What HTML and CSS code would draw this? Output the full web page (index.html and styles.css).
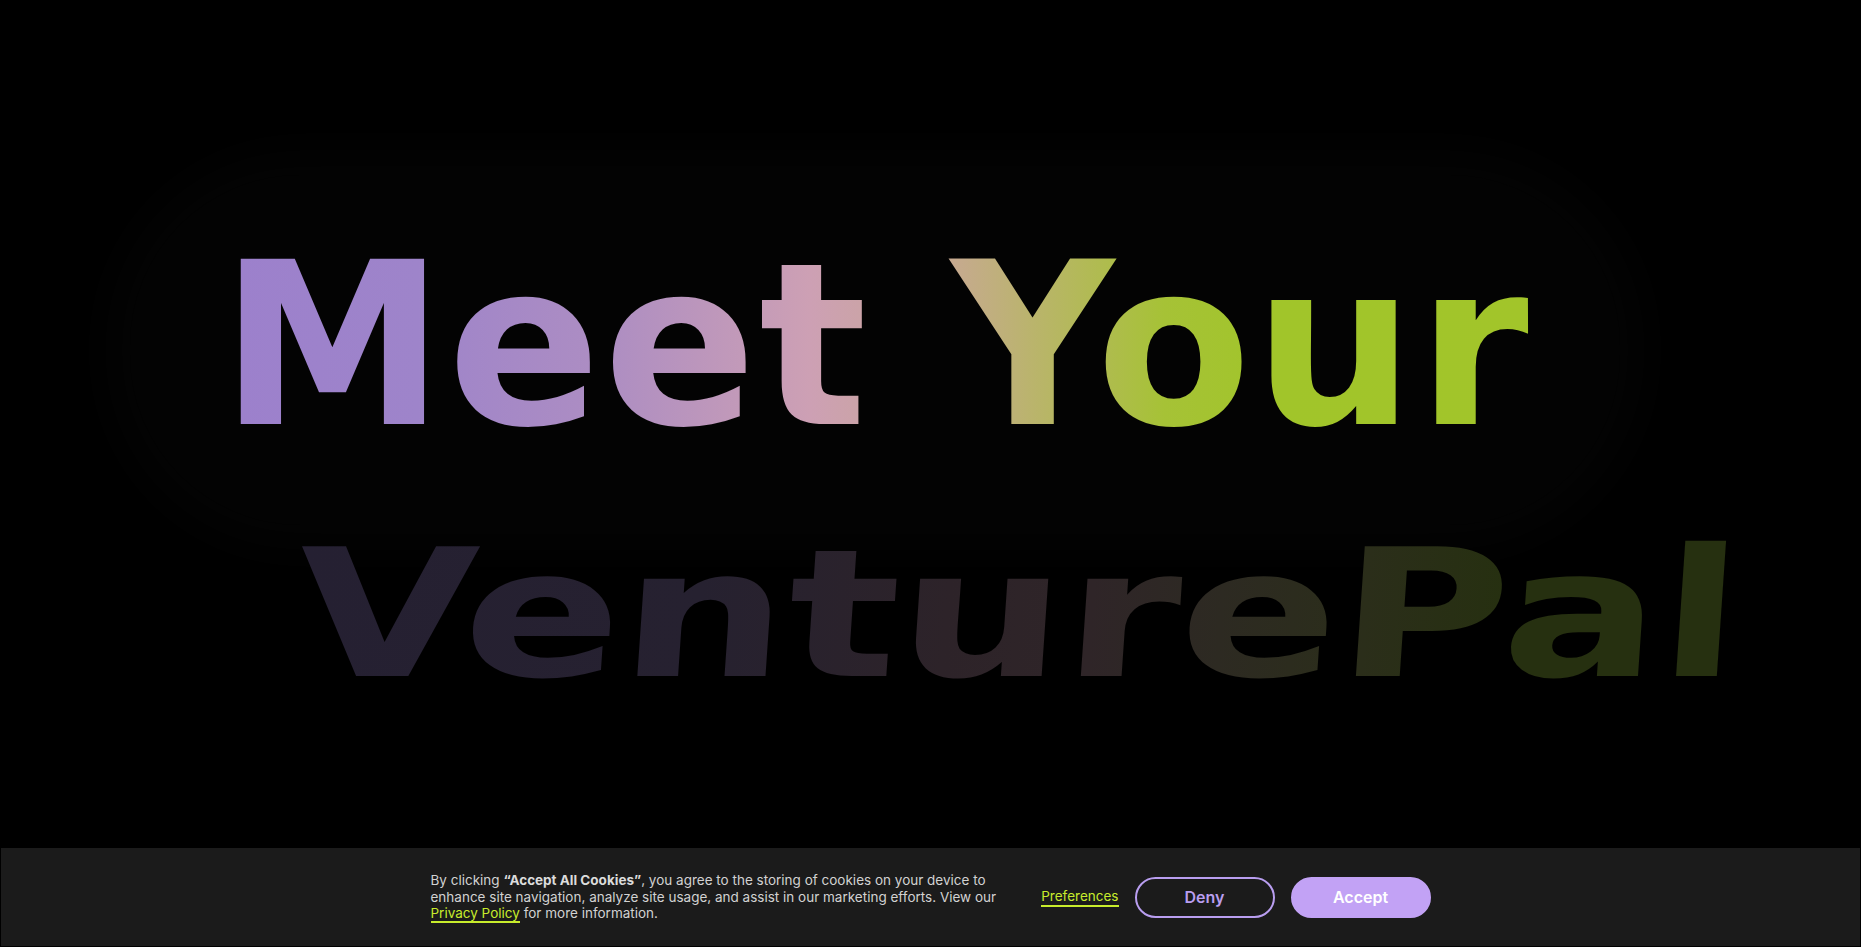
FILE: index.html
```html
<!DOCTYPE html>
<html lang="en">
<head>
<meta charset="utf-8">
<title>Meet Your VenturePal</title>
<link rel="stylesheet" href="styles.css">
</head>
<body>
<main class="hero">
  <div class="halo"></div>
  <h1 class="headline">
    <span class="line line-top">Meet Your</span>
    <span class="line line-bottom">VenturePal</span>
  </h1>
</main>
<div class="cookie-banner">
  <div class="cookie-inner">
    <p class="cookie-text">By clicking <strong>“Accept All Cookies”</strong>, you agree to the storing of cookies on your device to enhance site navigation, analyze site usage, and assist in our marketing efforts. View our <a class="policy-link" href="#">Privacy Policy</a> for more information.</p>
    <div class="cookie-actions">
      <a class="pref-link" href="#">Preferences</a>
      <button class="btn btn-deny" type="button">Deny</button>
      <button class="btn btn-accept" type="button">Accept</button>
    </div>
  </div>
</div>
</body>
</html>
```
FILE: styles.css
```css
html, body {
  margin: 0;
  padding: 0;
  background: #000;
  height: 947px;
  overflow: hidden;
}

.hero {
  position: relative;
  height: 947px;
  box-sizing: border-box;
  padding-top: 233px;
}

.halo {
  position: absolute;
  left: 130px;
  top: 175px;
  width: 1490px;
  height: 350px;
  border-radius: 170px;
  background: #030303;
  box-shadow: 0 0 50px 25px rgba(5, 5, 5, 0.8);
}

.headline {
  position: relative;
  margin: 0;
  display: flex;
  flex-direction: column;
  align-items: flex-start;
  font-family: "DejaVu Sans", sans-serif;
  font-weight: 700;
}

.line {
  display: inline-block;
  white-space: nowrap;
  -webkit-background-clip: text;
  background-clip: text;
  color: transparent;
}

.line-top {
  font-size: 226px;
  line-height: 226px;
  margin-left: 220px;
  letter-spacing: 2.5px;
  background-image: linear-gradient(90deg, #9c80cc 0%, #9e84ca 15%, #ae8ec2 30%, #cda0b4 45%, #c8a895 55%, #bab46c 62%, #a6c236 72%, #a1c52a 80%, #a2c52a 100%);
}

.line-bottom {
  font-size: 178px;
  line-height: 178px;
  margin-top: 67px;
  margin-left: 290px;
  transform-origin: left bottom;
  transform: scaleX(1.31) skewX(-3deg);
  background-image: linear-gradient(90deg, #252032 0%, #262130 28%, #2d2329 45%, #2f2528 55%, #2d2a22 64%, #2b2e1a 74%, #263010 84%, #263010 100%);
}

.cookie-banner {
  position: fixed;
  left: 0;
  right: 0;
  bottom: 0;
  height: 100px;
  box-sizing: border-box;
  background: #1b1b1b;
  border: 1px solid #000;
  display: flex;
  align-items: center;
  justify-content: center;
  font-family: "Inter", "Noto Sans", sans-serif;
}

.cookie-inner {
  width: 1000px;
  display: flex;
  align-items: center;
}

.cookie-text {
  flex: 0 0 572px;
  margin: 0;
  font-size: 13.5px;
  line-height: 16.5px;
  color: #d2d2d2;
}

.cookie-text strong {
  font-weight: 700;
  color: #dcdcdc;
}

.policy-link,
.pref-link {
  color: #c8ec2c;
  text-decoration: none;
  border-bottom: 2px solid #c8ec2c;
}

.cookie-actions {
  margin-left: auto;
  display: flex;
  align-items: center;
  gap: 16px;
}

.pref-link {
  font-size: 13.5px;
  line-height: 16px;
  padding-bottom: 1px;
}

.btn {
  width: 140px;
  height: 41px;
  border-radius: 999px;
  font-family: "Inter", "Noto Sans", sans-serif;
  font-size: 16px;
  font-weight: 600;
  box-sizing: border-box;
  cursor: pointer;
}

.btn-deny {
  background: transparent;
  border: 2px solid #b99ef0;
  color: #b99ef0;
}

.btn-accept {
  background: #c2a2f5;
  border: 2px solid #c2a2f5;
  color: #fff;
}
```
